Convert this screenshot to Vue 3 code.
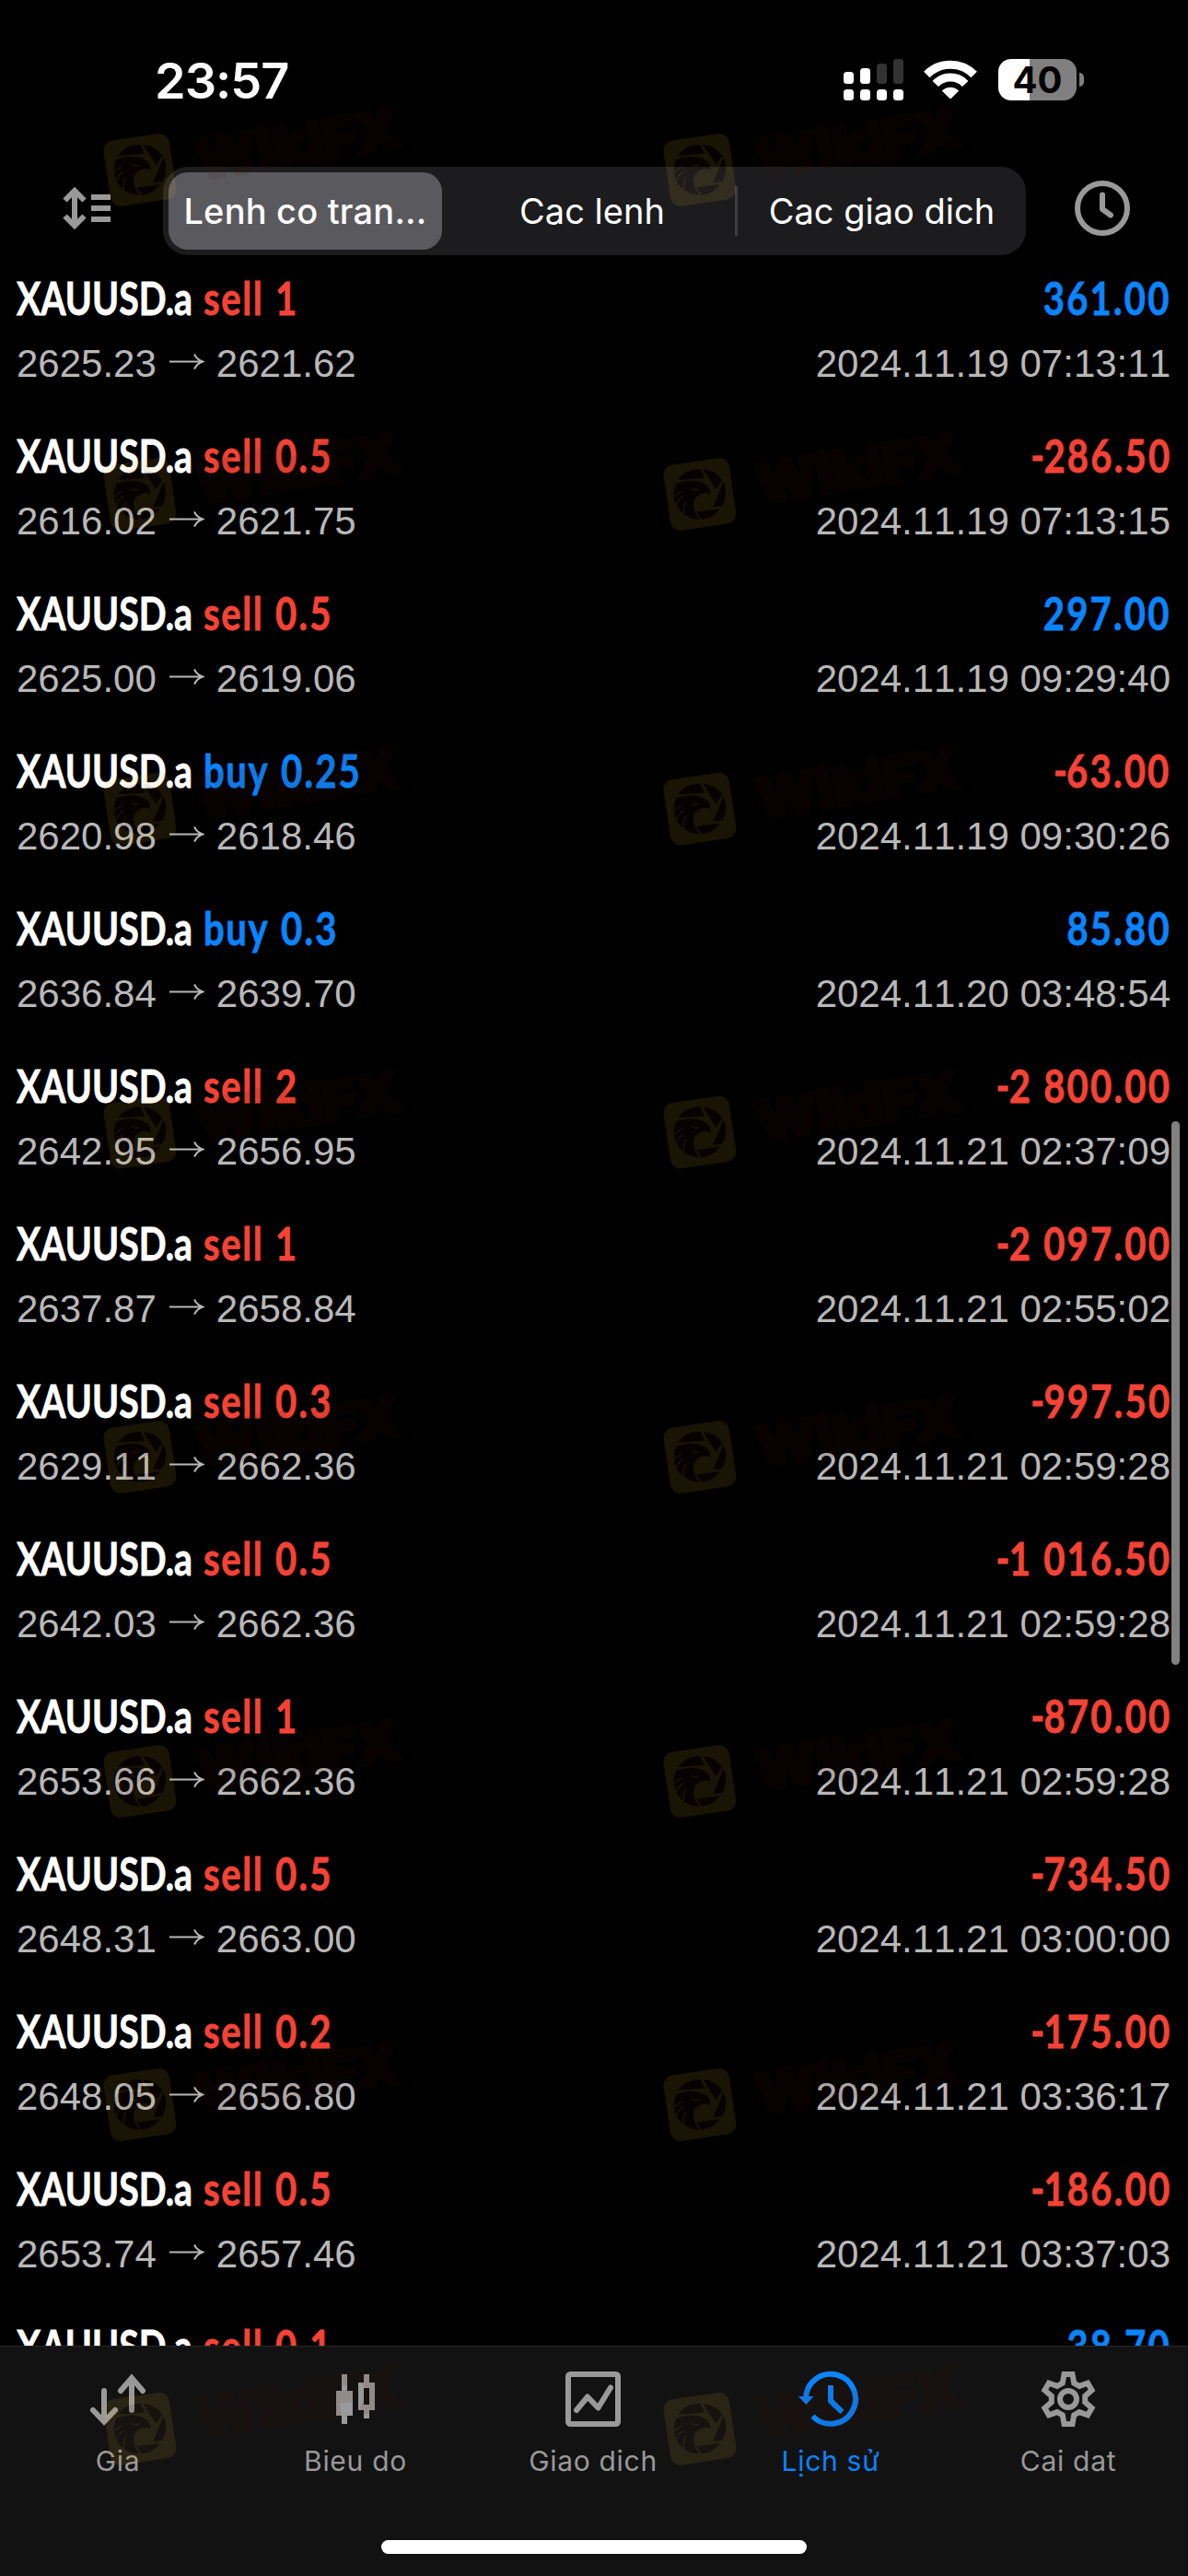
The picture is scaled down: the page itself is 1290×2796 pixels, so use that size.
<script setup>
const trades = [
  ['sell', '1', '361.00', '2625.23', '2621.62', '2024.11.19 07:13:11'],
  ['sell', '0.5', '-286.50', '2616.02', '2621.75', '2024.11.19 07:13:15'],
  ['sell', '0.5', '297.00', '2625.00', '2619.06', '2024.11.19 09:29:40'],
  ['buy', '0.25', '-63.00', '2620.98', '2618.46', '2024.11.19 09:30:26'],
  ['buy', '0.3', '85.80', '2636.84', '2639.70', '2024.11.20 03:48:54'],
  ['sell', '2', '-2 800.00', '2642.95', '2656.95', '2024.11.21 02:37:09'],
  ['sell', '1', '-2 097.00', '2637.87', '2658.84', '2024.11.21 02:55:02'],
  ['sell', '0.3', '-997.50', '2629.11', '2662.36', '2024.11.21 02:59:28'],
  ['sell', '0.5', '-1 016.50', '2642.03', '2662.36', '2024.11.21 02:59:28'],
  ['sell', '1', '-870.00', '2653.66', '2662.36', '2024.11.21 02:59:28'],
  ['sell', '0.5', '-734.50', '2648.31', '2663.00', '2024.11.21 03:00:00'],
  ['sell', '0.2', '-175.00', '2648.05', '2656.80', '2024.11.21 03:36:17'],
  ['sell', '0.5', '-186.00', '2653.74', '2657.46', '2024.11.21 03:37:03'],
  ['sell', '0.1', '38.70', '', '', ''],
].map(([side, volume, profit, open, close, time]) => ({
  side,
  volume,
  loss: profit.startsWith('-'),
  amount: profit.replace('-', ''),
  open,
  close,
  time,
}))

const markRows = [144, 496, 837.5, 1188.5, 1541, 1893, 2244, 2595.7]
const marks = markRows.flatMap((y) => [{ x: 111.2, y }, { x: 719.2, y }])
</script>

<template>
  <div class="screen">
    <header class="status">
      <span class="clock">23:57</span>
      <div class="indicators">
        <svg width="66" height="46" viewBox="0 0 66 46">
          <g fill="#fff">
            <rect x="0" y="14" width="11" height="13" rx="3.5" />
            <rect x="18" y="10" width="11" height="17" rx="3.5" />
            <rect v-for="i in 4" :key="i" :x="(i - 1) * 18" y="33" width="11" height="12" rx="3.5" />
          </g>
          <g fill="#333">
            <rect x="36" y="5" width="11" height="22" rx="3.5" />
            <rect x="54" y="0" width="11" height="27" rx="3.5" />
          </g>
        </svg>
        <svg class="wifi" width="58" height="46" viewBox="0 0 58 46">
          <g fill="none" stroke="#fff" stroke-width="9">
            <path d="M3.3 17 A36 36 0 0 1 54.7 17" />
            <path d="M12.8 27 A22.5 22.5 0 0 1 45.2 27" />
          </g>
          <path fill="#fff" d="M19.8 34.6 A13 13 0 0 1 38.2 34.6 L30.2 42.6 Q29 43.6 27.8 42.6 Z" />
        </svg>
        <div class="battery"><span>40</span></div>
        <i class="nub"></i>
      </div>
    </header>

    <nav class="toolbar">
      <svg class="sort" width="54" height="60" viewBox="0 0 54 60">
        <g fill="none" stroke="#999" stroke-width="6">
          <path d="M13 10 V50" />
          <path d="M2.5 21.5 L13 11 L23.5 21.5" />
          <path d="M2.5 38.5 L13 49 L23.5 38.5" />
          <path d="M31 18 H52 M31 30 H52 M31 42 H52" />
        </g>
      </svg>
      <div class="segments">
        <span class="seg on"><b>Lenh co tran...</b></span>
        <span class="seg second"><b>Cac lenh</b></span>
        <span class="seg third"><b>Cac giao dich</b></span>
      </div>
      <svg class="period" width="60" height="60" viewBox="0 0 60 60" fill="none" stroke="#999" stroke-width="6">
        <circle cx="30" cy="30" r="27" />
        <path d="M30 15.5 V31 L39 37.5" stroke-linecap="round" stroke-linejoin="round" />
      </svg>
    </nav>

    <main class="list">
      <article v-for="(t, i) in trades" :key="i" class="trade">
        <div class="line head">
          <div class="left">
            <span class="symbol"><b>XAUUSD.a</b></span>
            <span class="side" :class="t.side"><b>{{ t.side }}</b></span>
            <span class="num" :class="t.side"><b>{{ t.volume }}</b></span>
          </div>
          <span class="num profit" :class="t.loss ? 'sell' : 'buy'"><b><span v-if="t.loss" class="minus">-</span>{{ t.amount }}</b></span>
        </div>
        <div v-if="t.open" class="line sub">
          <div class="left">
            <span>{{ t.open }}</span>
            <svg class="arrow" width="38" height="18" viewBox="0 0 38 18" fill="none" stroke="#b8b8b8" stroke-width="2">
              <path d="M0 9.5 H36 M27 1.5 Q30 7.5 36 9.5 Q30 11.5 27 17.5" />
            </svg>
            <span>{{ t.close }}</span>
          </div>
          <span class="time">{{ t.time }}</span>
        </div>
      </article>
      <i class="scroll"></i>
    </main>

    <footer class="tabs">
      <div class="tab">
        <svg width="66" height="66" viewBox="0 0 66 66" fill="none" stroke="#999" stroke-width="6" stroke-linecap="round">
          <path d="M18 24 V56 M6 45 L18 57.5 L30 45" />
          <path d="M48 45 V11 M36 24 L48 10 L60 24" />
        </svg>
        <span>Gia</span>
      </div>
      <div class="tab">
        <svg width="66" height="66" viewBox="0 0 66 66" fill="#999">
          <path d="M18 6 h6 V24 h6 V51 h-6 v9 h-6 v-9 h-6 V24 h6 Z" />
          <path fill-rule="evenodd" d="M42 6 h6 v9 h6 v30 h-6 v9 h-6 v-9 h-6 V15 h6 Z M42 21 v18 h6 V21 Z" />
        </svg>
        <span>Bieu do</span>
      </div>
      <div class="tab">
        <svg width="66" height="66" viewBox="0 0 66 66" fill="none" stroke="#999" stroke-width="6">
          <rect x="6" y="6" width="54" height="54" rx="2.5" />
          <path d="M15 45 L27 30.5 L38.5 42.5 L52 20.5" stroke-linecap="round" stroke-linejoin="round" />
        </svg>
        <span>Giao dich</span>
      </div>
      <div class="tab active">
        <svg width="72" height="66" viewBox="-3 0 72 66" fill="none" stroke="#0a84ff" stroke-width="6">
          <path d="M6 33 A27 27 0 1 1 13.5 51.5" />
          <path d="M-2 30 H14.5 L6.3 39 Z" fill="#0a84ff" stroke="none" />
          <path d="M33 18 V35 L45.5 47" />
        </svg>
        <span>Lịch sử</span>
      </div>
      <div class="tab">
        <svg width="66" height="66" viewBox="-33 -33 66 66" fill="none" stroke="#999" stroke-width="6">
          <path d="M-4.5 -27 H4.5 L6.2 -17.4 L12 -14.1 L21.1 -17.4 L25.6 -9.6 L18.2 -3.3 V3.3 L25.6 9.6 L21.1 17.4 L12 14.1 L6.2 17.4 L4.5 27 H-4.5 L-6.2 17.4 L-12 14.1 L-21.1 17.4 L-25.6 9.6 L-18.2 3.3 V-3.3 L-25.6 -9.6 L-21.1 -17.4 L-12 -14.1 L-6.2 -17.4 Z" />
          <circle r="9" />
        </svg>
        <span>Cai dat</span>
      </div>
      <i class="home"></i>
    </footer>

    <svg class="marks" width="1290" height="2796" viewBox="0 0 1290 2796">
      <g v-for="(m, i) in marks" :key="i" :transform="`translate(${m.x} ${m.y})`" opacity="0.1">
        <rect x="4.7" y="4.5" width="72" height="72" rx="11" fill="#ffbe28" transform="rotate(-8.5 40.7 40.5)" />
        <g transform="translate(-5 -6) scale(0.3333)" fill="#461400">
          <path d="M66 93 A82 82 0 0 1 138 57 L153 87 Z" />
          <path d="M148 58 A82 82 0 0 1 210 93 L190 124 Z" />
          <path d="M214 98 A82 82 0 0 1 209 178 L180 181 Z" />
          <path d="M203 186 A82 82 0 0 1 143 221 L126 197 Z" />
          <path d="M60 105 C85 94 130 90 150 105 C166 112 173 124 171 143 L165 137 C148 133 126 142 119 160 C112 180 122 203 136 221 A82 82 0 0 1 52 140 C54 125 57 112 60 105 Z" />
          <g fill="none" stroke="#ffbe28" stroke-width="4">
            <path d="M110 121 Q122 130 134 123" />
            <path d="M52 148 Q66 134 78 130 M60 174 Q68 154 84 146 M84 206 Q82 180 92 162" />
          </g>
        </g>
        <text
          x="0" y="0" transform="translate(106 50) rotate(-9)" textLength="222" lengthAdjust="spacingAndGlyphs"
          fill="#461400" stroke="#461400" stroke-width="6" stroke-linejoin="round"
        >WikiFX</text>
      </g>
    </svg>
  </div>
</template>

<style>
body {
  background: #000;
}
</style>

<style scoped>
.screen {
  position: relative;
  width: 1290px;
  height: 2796px;
  overflow: hidden;
  background: #000;
  color: #fff;
  font-family: Inter, "Liberation Sans", sans-serif;
  display: flex;
  flex-direction: column;
}
b {
  font-weight: inherit;
  display: inline-block;
  white-space: pre;
}
i {
  display: block;
}
.status {
  height: 117px;
  padding: 64px 113px 0 168px;
  display: flex;
  justify-content: space-between;
  align-items: flex-start;
}
.clock {
  font-size: 54px;
  font-weight: 600;
  line-height: 48px;
  letter-spacing: -1px;
}
.indicators {
  display: flex;
  align-items: flex-start;
}
.wifi {
  margin-left: 21px;
}
.battery {
  width: 85px;
  height: 45px;
  margin-left: 23px;
  border-radius: 14px;
  background: linear-gradient(90deg, #fff 0 34px, #808080 34px);
  color: #000;
  font-size: 40px;
  font-weight: 700;
  line-height: 45px;
  text-align: center;
}
.nub {
  width: 5px;
  height: 15px;
  margin: 15px 0 0 3px;
  border-radius: 0 5px 5px 0;
  background: #808080;
}
.toolbar {
  height: 96px;
  margin-bottom: 16px;
  padding: 0 63px 0 68px;
  display: flex;
  align-items: center;
}
.sort,
.period {
  position: relative;
  top: -3px;
}
.segments {
  display: flex;
  width: 937px;
  height: 96px;
  margin: 0 53px 0 55px;
  padding: 6px;
  box-sizing: border-box;
  border-radius: 27px;
  background: #1c1c1e;
  font-size: 38px;
  line-height: 84px;
}
.seg {
  box-sizing: border-box;
  text-align: center;
}
.seg.on {
  width: 297px;
  border-radius: 21px;
  background: #5a595e;
  font-weight: 500;
  letter-spacing: 0.2px;
}
.seg.second {
  width: 318px;
  padding-left: 8px;
}
.seg.third {
  width: 310px;
  padding-left: 9px;
  background: linear-gradient(#3d3d40, #3d3d40) 0 15px / 3px 54px no-repeat;
}
.list {
  position: relative;
  height: 2253px;
  overflow: hidden;
}
.trade {
  height: 171px;
  padding: 0 20px 0 18px;
  display: flex;
  flex-direction: column;
  gap: 18px;
}
.line {
  display: flex;
  justify-content: space-between;
}
.left {
  display: flex;
}
.head {
  height: 60px;
  font-family: Lato, sans-serif;
  font-size: 50px;
  font-weight: 700;
  line-height: 60px;
  -webkit-text-stroke: 0.8px currentColor;
}
.head b {
  transform: scaleX(0.8);
  transform-origin: left;
}
.head .symbol b {
  transform: scaleX(0.785);
}
.symbol {
  width: 203px;
}
.side {
  letter-spacing: 2px;
}
.side.sell {
  width: 78px;
}
.side.buy {
  width: 84px;
}
.num {
  letter-spacing: 2.8px;
}
.profit b {
  transform-origin: right;
  margin-right: -2px;
}
.minus {
  letter-spacing: -1px;
}
.sell {
  color: #f44336;
}
.buy {
  color: #0a84ff;
}
.sub {
  height: 48px;
  font-family: "Liberation Sans", Arial, sans-serif;
  font-size: 42px;
  font-kerning: none;
  line-height: 48px;
  color: #b8b8b8;
}
.time {
  margin-right: -1px;
}
.arrow {
  margin: 12px 13px 0 14px;
}
.scroll {
  position: absolute;
  left: 1272px;
  top: 924px;
  width: 9px;
  height: 590px;
  border-radius: 5px;
  background: #808080;
}
.tabs {
  position: relative;
  height: 250px;
  box-sizing: border-box;
  border-top: 1px solid #2b2b2b;
  background: #121212;
  display: flex;
}
.tab {
  width: 258px;
  padding: 24px 2px 0 0;
  box-sizing: border-box;
  display: flex;
  flex-direction: column;
  align-items: center;
  color: #999;
  font-size: 30px;
  letter-spacing: 0.7px;
}
.tab span {
  margin-top: 16px;
  line-height: 36px;
}
.tab.active {
  color: #0a84ff;
}
.home {
  position: absolute;
  left: 414px;
  top: 210px;
  width: 462px;
  height: 15px;
  border-radius: 8px;
  background: #fff;
}
.marks {
  position: absolute;
  left: 0;
  top: 0;
  pointer-events: none;
}
.marks text {
  font-family: Inter, sans-serif;
  font-size: 58px;
  font-weight: 800;
}
</style>
